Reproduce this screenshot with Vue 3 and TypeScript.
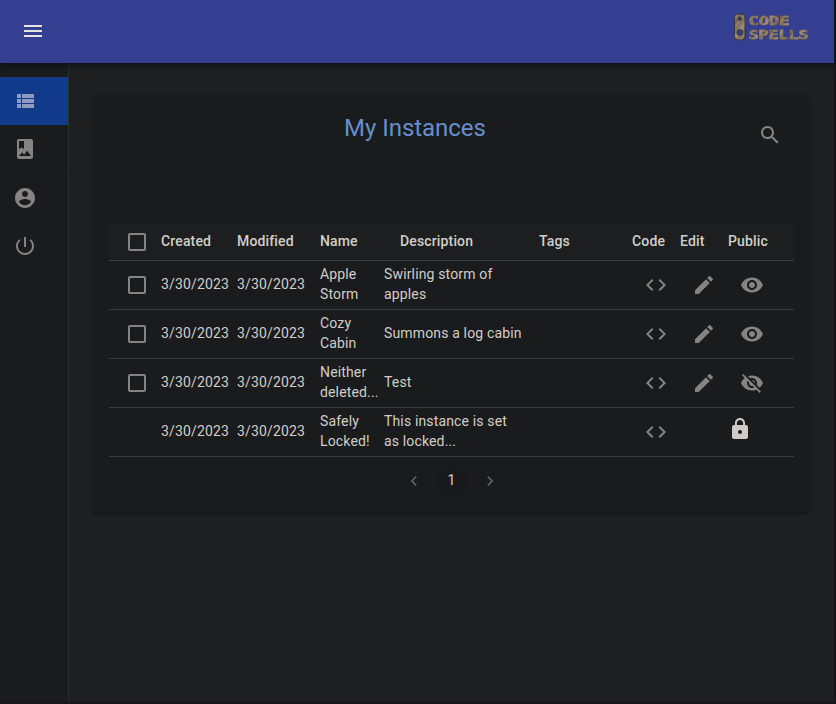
<script setup lang="ts">
interface Instance {
  name: string
  description: string
  locked: boolean
  visible: boolean
}

const created = '3/30/2023'
const instances: Instance[] = [
  { name: 'Apple Storm', description: 'Swirling storm of apples', locked: false, visible: true },
  { name: 'Cozy Cabin', description: 'Summons a log cabin', locked: false, visible: true },
  { name: 'Neither deleted...', description: 'Test', locked: false, visible: false },
  { name: 'Safely Locked!', description: 'This instance is set as locked...', locked: true, visible: true },
]

const icons = {
  menu: 'M3 18h18v-2H3v2zm0-5h18v-2H3v2zm0-7v2h18V6H3z',
  list: 'M4 14h4v-4H4v4zm0 5h4v-4H4v4zM4 9h4V5H4v4zm5 5h12v-4H9v4zm0 5h12v-4H9v4zM9 5v4h12V5H9z',
  album: 'M18 2H6c-1.1 0-2 .9-2 2v16c0 1.1.9 2 2 2h12c1.1 0 2-.9 2-2V4c0-1.1-.9-2-2-2zM6 4h5v8l-2.5-1.5L6 12V4zm0 15l3-3.86 2.14 2.58 3-3.86L18 19H6z',
  account: 'M12 2C6.48 2 2 6.48 2 12s4.48 10 10 10 10-4.48 10-10S17.52 2 12 2zm0 3c1.66 0 3 1.34 3 3s-1.34 3-3 3-3-1.34-3-3 1.34-3 3-3zm0 14.2c-2.5 0-4.71-1.28-6-3.22.03-1.99 4-3.08 6-3.08 1.99 0 5.97 1.09 6 3.08-1.29 1.94-3.5 3.22-6 3.22z',
  power: 'M13 3h-2v10h2V3zm4.83 2.17l-1.42 1.42C17.99 7.86 19 9.81 19 12c0 3.87-3.13 7-7 7s-7-3.13-7-7c0-2.19 1.01-4.14 2.58-5.42L6.17 5.17C4.23 6.82 3 9.26 3 12c0 4.97 4.03 9 9 9s9-4.03 9-9c0-2.74-1.23-5.18-3.17-6.83z',
  search: 'M15.5 14h-.79l-.28-.27C15.41 12.59 16 11.11 16 9.5 16 5.91 13.09 3 9.5 3S3 5.91 3 9.5 5.91 16 9.5 16c1.61 0 3.09-.59 4.23-1.57l.27.28v.79l5 4.99L20.49 19l-4.99-5zm-6 0C7.01 14 5 11.99 5 9.5S7.01 5 9.5 5 14 7.01 14 9.5 11.99 14 9.5 14z',
  box: 'M19 5v14H5V5h14m0-2H5c-1.1 0-2 .9-2 2v14c0 1.1.9 2 2 2h14c1.1 0 2-.9 2-2V5c0-1.1-.9-2-2-2z',
  code: 'M9.4 16.6L4.8 12l4.6-4.6L8 6l-6 6 6 6 1.4-1.4zm5.2 0l4.6-4.6-4.6-4.6L16 6l6 6-6 6-1.4-1.4z',
  edit: 'M3 17.25V21h3.75L17.81 9.94l-3.75-3.75L3 17.25zM20.71 7.04c.39-.39.39-1.02 0-1.41l-2.34-2.34c-.39-.39-1.02-.39-1.41 0l-1.83 1.83 3.75 3.75 1.83-1.83z',
  eye: 'M12 4.5C7 4.5 2.73 7.61 1 12c1.73 4.39 6 7.5 11 7.5s9.27-3.11 11-7.5c-1.73-4.39-6-7.5-11-7.5zM12 17c-2.76 0-5-2.24-5-5s2.24-5 5-5 5 2.24 5 5-2.24 5-5 5zm0-8c-1.66 0-3 1.34-3 3s1.34 3 3 3 3-1.34 3-3-1.34-3-3-3z',
  eyeOff: 'M12 7c2.76 0 5 2.24 5 5 0 .65-.13 1.26-.36 1.83l2.92 2.92c1.51-1.26 2.7-2.89 3.43-4.75-1.73-4.39-6-7.5-11-7.5-1.4 0-2.74.25-3.98.7l2.16 2.16C10.74 7.13 11.35 7 12 7zM2 4.27l2.28 2.28.46.46C3.08 8.3 1.78 10.02 1 12c1.73 4.39 6 7.5 11 7.5 1.55 0 3.03-.3 4.38-.84l.42.42L19.73 22 21 20.73 3.27 3 2 4.27zM7.53 9.8l1.55 1.55c-.05.21-.08.43-.08.65 0 1.66 1.34 3 3 3 .22 0 .44-.03.65-.08l1.55 1.55c-.67.33-1.41.53-2.2.53-2.76 0-5-2.24-5-5 0-.79.2-1.53.53-2.2zm4.31-.78l3.15 3.15.02-.16c0-1.66-1.34-3-3-3l-.17.01z',
  lock: 'M18 8h-1V6c0-2.76-2.24-5-5-5S7 3.24 7 6v2H6c-1.1 0-2 .9-2 2v10c0 1.1.9 2 2 2h12c1.1 0 2-.9 2-2V10c0-1.1-.9-2-2-2zm-6 9c-1.1 0-2-.9-2-2s.9-2 2-2 2 .9 2 2-.9 2-2 2zm3.1-9H8.9V6c0-1.71 1.39-3.1 3.1-3.1 1.71 0 3.1 1.39 3.1 3.1v2z',
  prev: 'M15.41 7.41L14 6l-6 6 6 6 1.41-1.41L10.83 12z',
  next: 'M10 6L8.59 7.41 13.17 12l-4.58 4.59L10 18l6-6z',
}
</script>

<template>
  <div class="page">
    <header class="bar">
      <svg class="icon menu" viewBox="0 0 24 24"><path :d="icons.menu" /></svg>
      <svg class="logo" viewBox="0 0 78 30" width="78" height="30">
        <defs>
          <linearGradient id="stone" gradientUnits="userSpaceOnUse" x1="0" y1="0" x2="7" y2="5" spreadMethod="reflect">
            <stop offset="0" stop-color="#a08f78" />
            <stop offset="0.45" stop-color="#7d6e5e" />
            <stop offset="0.7" stop-color="#94836e" />
            <stop offset="1" stop-color="#6b5c50" />
          </linearGradient>
        </defs>
        <rect x="2.5" y="2" width="10.5" height="26" rx="3.5" fill="url(#stone)" stroke="#3b3537" />
        <circle cx="7.8" cy="6.8" r="1.7" fill="#34407e" stroke="#3b3537" />
        <circle cx="7.8" cy="20.5" r="2.9" fill="#34407e" stroke="#3b3537" />
        <g class="word" fill="url(#stone)" stroke="url(#stone)">
          <text x="16.5" y="12.6" textLength="41" lengthAdjust="spacingAndGlyphs">CODE</text>
          <text x="16.5" y="26.8" textLength="60" lengthAdjust="spacingAndGlyphs">SPELLS</text>
        </g>
      </svg>
    </header>

    <div class="body">
      <nav class="side">
        <a class="item active"><svg class="icon" viewBox="0 0 24 24"><path :d="icons.list" /></svg></a>
        <a class="item ruled"><svg class="icon" viewBox="0 0 24 24"><path :d="icons.album" /></svg></a>
        <a class="item"><svg class="icon" viewBox="0 0 24 24"><path :d="icons.account" /></svg></a>
        <a class="item"><svg class="icon" viewBox="0 0 24 24"><path :d="icons.power" /></svg></a>
      </nav>

      <main class="main">
        <section class="card">
          <div class="top">
            <h1>My Instances</h1>
            <svg class="icon" viewBox="0 0 24 24"><path :d="icons.search" /></svg>
          </div>

          <div class="row head">
            <svg class="icon check" viewBox="0 0 24 24"><path :d="icons.box" /></svg>
            <span>Created</span>
            <span>Modified</span>
            <span>Name</span>
            <span class="inset">Description</span>
            <span>Tags</span>
            <span>Code</span>
            <span>Edit</span>
            <span>Public</span>
          </div>

          <div v-for="item in instances" :key="item.name" class="row">
            <svg v-if="!item.locked" class="icon check" viewBox="0 0 24 24"><path :d="icons.box" /></svg>
            <span v-else></span>
            <span>{{ created }}</span>
            <span>{{ created }}</span>
            <span class="name">{{ item.name }}</span>
            <span class="desc">{{ item.description }}</span>
            <span></span>
            <svg class="icon act" viewBox="0 0 24 24"><path :d="icons.code" /></svg>
            <svg v-if="!item.locked" class="icon act" viewBox="0 0 24 24"><path :d="icons.edit" /></svg>
            <span v-else></span>
            <svg v-if="item.locked" class="icon lock" viewBox="0 0 24 24"><path :d="icons.lock" /></svg>
            <svg v-else class="icon act" viewBox="0 0 24 24"><path :d="item.visible ? icons.eye : icons.eyeOff" /></svg>
          </div>

          <div class="pager">
            <svg class="chev" viewBox="0 0 24 24"><path :d="icons.prev" /></svg>
            <span class="current">1</span>
            <svg class="chev" viewBox="0 0 24 24"><path :d="icons.next" /></svg>
          </div>
        </section>
      </main>
    </div>
  </div>
</template>

<style>
body {
  background: #181617;
}
</style>

<style scoped>
.page {
  box-sizing: border-box;
  width: 836px;
  height: 704px;
  display: flex;
  flex-direction: column;
  overflow: hidden;
  border-right: 2px solid #151517;
  border-bottom: 2px solid #1b1518;
  background: #1e1f21;
  color: #d1cec9;
  font-family: Roboto, "Liberation Sans", sans-serif;
  font-size: 14px;
  line-height: 20px;
  letter-spacing: 0.15px;
}
.icon {
  display: block;
  width: 24px;
  height: 24px;
  fill: #868483;
}
.bar {
  position: relative;
  z-index: 1;
  box-sizing: border-box;
  flex: none;
  height: 63px;
  padding: 12px 24px 0 21px;
  display: flex;
  justify-content: space-between;
  background: #343f91;
  box-shadow: 0 2px 4px -1px rgba(0, 0, 0, 0.3), 0 4px 5px rgba(0, 0, 0, 0.16), 0 1px 10px rgba(0, 0, 0, 0.15);
}
.menu {
  margin-top: 7px;
  fill: #e7e3df;
}
.word {
  font: bold 12px "DejaVu Sans Mono", monospace;
  letter-spacing: 0;
  stroke-width: 0.9px;
  filter: drop-shadow(0.6px 0.8px 0.4px #2b2630);
}
.body {
  flex: 1;
  display: flex;
  min-height: 0;
}
.side {
  flex: none;
  width: 68px;
  padding-top: 14px;
  border-right: 1px solid #2b2d2f;
  background: #1a1b1c;
}
.item {
  display: flex;
  align-items: center;
  height: 48px;
  padding-left: 13px;
}
.ruled {
  border-bottom: 1px solid #1e1f20;
}
.active {
  background: #113b8a;
}
.active .icon {
  fill: #8c9ac1;
}
.main {
  flex: 1;
  padding: 32px 24px 0;
}
.card {
  box-sizing: border-box;
  height: 418px;
  margin-left: -1px;
  padding: 0 16px 0 17px;
  border-radius: 4px;
  background: #1a1b1c;
  box-shadow: 0 2px 1px -1px rgba(0, 0, 0, 0.2), 0 1px 1px rgba(0, 0, 0, 0.14), 0 1px 3px rgba(0, 0, 0, 0.12);
}
.top {
  display: flex;
  justify-content: space-between;
  height: 128px;
  padding-right: 12px;
}
.top .icon {
  margin-top: 28px;
}
h1 {
  flex: 1;
  margin: 17px 0 0;
  padding-right: 37px;
  color: #658fcd;
  font-size: 24px;
  font-weight: 400;
  line-height: 32px;
  letter-spacing: -0.04px;
  text-align: center;
}
.row {
  box-sizing: border-box;
  display: grid;
  grid-template-columns: 52px 76px 83px 64px 155px 93px 48px 48px 66px;
  align-items: center;
  height: 49px;
  border-bottom: 1px solid #3b3c3e;
}
.row > span {
  position: relative;
  top: -1px;
}
.head {
  height: 38px;
  background: #1d1e1f;
  font-weight: 500;
}
.head .check {
  position: relative;
  top: 0.5px;
}
.check {
  margin-left: 16px;
}
.inset {
  padding-left: 16px;
}
.desc {
  padding-right: 15px;
}
.act {
  margin-left: 12px;
}
.lock {
  margin-bottom: 6px;
  fill: #cfccc8;
}
.pager {
  display: flex;
  align-items: center;
  justify-content: center;
  gap: 12px;
  padding-top: 8px;
}
.chev {
  width: 20px;
  height: 20px;
  fill: #62615f;
}
.current {
  width: 32px;
  height: 32px;
  border-radius: 50%;
  background: #18191a;
  line-height: 31px;
  text-align: center;
}
</style>
